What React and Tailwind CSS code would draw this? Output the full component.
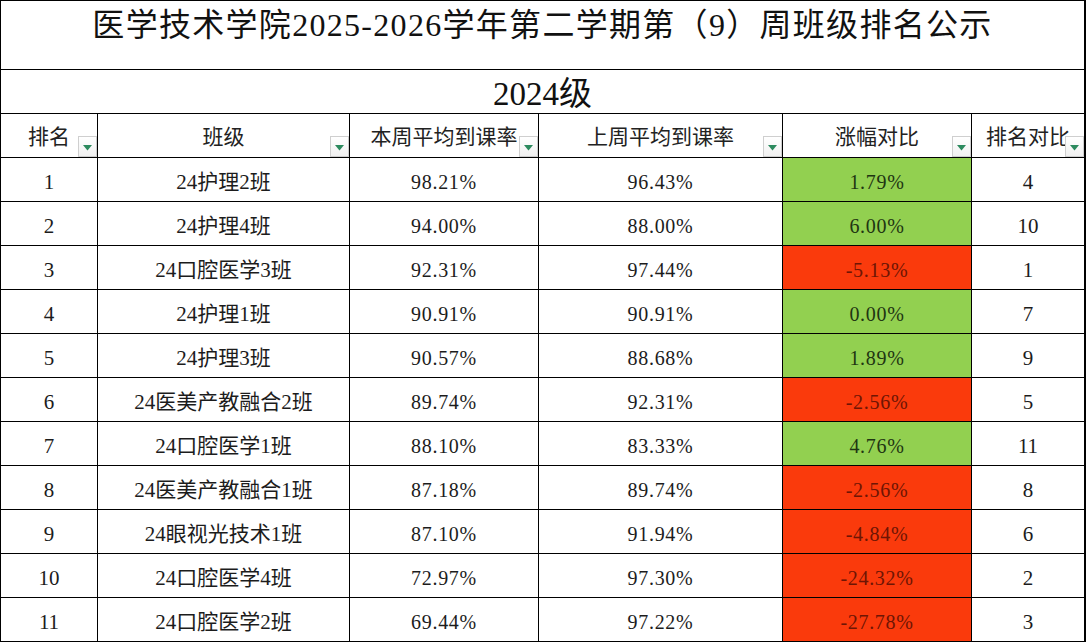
import React from 'react';

const rows = [
  [1, '24护理2班', '98.21%', '96.43%', '1.79%', true, 4],
  [2, '24护理4班', '94.00%', '88.00%', '6.00%', true, 10],
  [3, '24口腔医学3班', '92.31%', '97.44%', '-5.13%', false, 1],
  [4, '24护理1班', '90.91%', '90.91%', '0.00%', true, 7],
  [5, '24护理3班', '90.57%', '88.68%', '1.89%', true, 9],
  [6, '24医美产教融合2班', '89.74%', '92.31%', '-2.56%', false, 5],
  [7, '24口腔医学1班', '88.10%', '83.33%', '4.76%', true, 11],
  [8, '24医美产教融合1班', '87.18%', '89.74%', '-2.56%', false, 8],
  [9, '24眼视光技术1班', '87.10%', '91.94%', '-4.84%', false, 6],
  [10, '24口腔医学4班', '72.97%', '97.30%', '-24.32%', false, 2],
  [11, '24口腔医学2班', '69.44%', '97.22%', '-27.78%', false, 3],
];

const headers = ['排名', '班级', '本周平均到课率', '上周平均到课率', '涨幅对比', '排名对比'];

const FilterButton = () => (
  <div className="absolute right-0 bottom-0 w-[19px] h-[21px] bg-gradient-to-b from-white to-[#f1f1f1] border border-[#cfcfcf] flex items-center justify-center pt-[3px]">
    <svg width="9" height="6" viewBox="0 0 9 6">
      <path d="M0 0 L9 0 L4.5 5.5 Z" fill="#2c8a5e" />
    </svg>
  </div>
);

const cell = 'border-r border-b border-black flex items-center justify-center';

export default function App() {
  return (
    <div className="w-[1087px] h-[642px] bg-white overflow-hidden font-['Liberation_Serif','Noto_Sans_CJK_SC',serif] text-[#1c1c1c]">
      <div className="w-[1086px] border-t border-l border-black">
        <div className="h-[69px] border-r-2 border-b border-black">
          <div className="h-[48px] flex items-center justify-center text-[32px] leading-none tracking-[1.3px] text-[#111]">
            医学技术学院2025-2026学年第二学期第（9）周班级排名公示
          </div>
        </div>
        <div className="h-[44px] border-r-2 border-b border-black flex items-center justify-center pt-[5px] text-[33px] leading-none text-[#111]">
          2024级
        </div>
        <div className="grid grid-cols-[97px_252px_189px_244px_189px_114px]">
          {headers.map((h, i) => (
            <div key={h} className={`${cell} relative h-[44px] pt-[3px] text-[21px] leading-none text-[#222] ${i === 5 ? 'border-r-2' : ''}`}>
              <span className="whitespace-nowrap">{h}</span>
              <FilterButton />
            </div>
          ))}
          {rows.map(([rank, name, cur, prev, diff, up, cmp]) => (
            <React.Fragment key={rank}>
              <div className={`${cell} h-[44px] pt-[5px] text-[21px] leading-none`}>{rank}</div>
              <div className={`${cell} h-[44px] pt-[5px] text-[21px] leading-none`}>{name}</div>
              <div className={`${cell} h-[44px] pt-[5px] text-[20px] leading-none tracking-[0.7px]`}>{cur}</div>
              <div className={`${cell} h-[44px] pt-[5px] text-[20px] leading-none tracking-[0.7px]`}>{prev}</div>
              <div
                className={`${cell} h-[44px] pt-[5px] text-[20px] leading-none tracking-[0.7px] ${
                  up ? 'bg-[#92d050] text-[#1f3512]' : 'bg-[#fa3a0c] text-[#6e1504]'
                }`}
              >
                {diff}
              </div>
              <div className={`${cell} border-r-2 h-[44px] pt-[5px] text-[21px] leading-none`}>{cmp}</div>
            </React.Fragment>
          ))}
        </div>
      </div>
    </div>
  );
}
